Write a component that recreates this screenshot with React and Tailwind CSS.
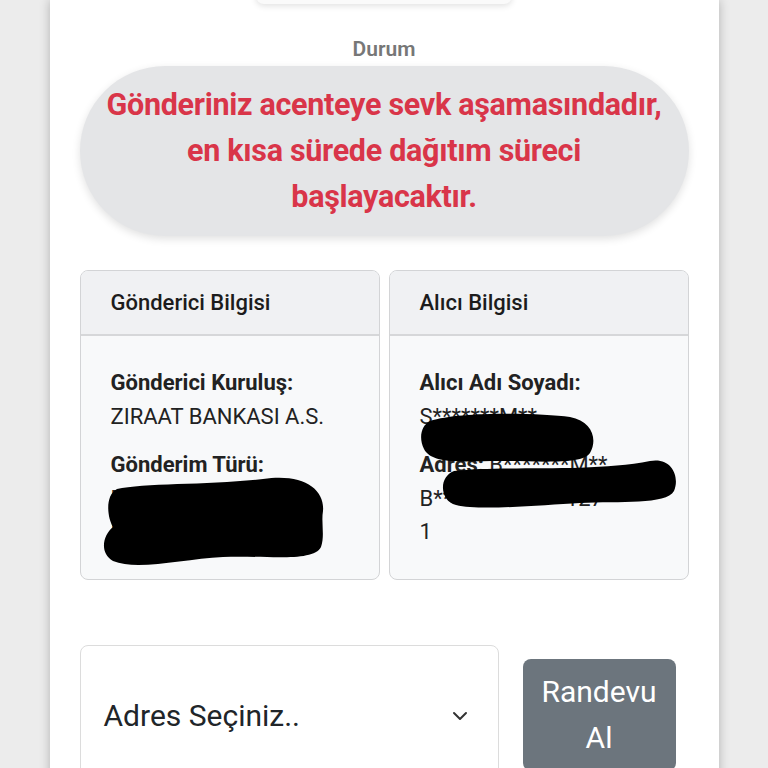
import React from 'react';
import { ChevronDown } from 'lucide-react';

const font = { fontFamily: 'Roboto, "Noto Sans", sans-serif' };

const Blob = ({ className, d, w, h }) => (
  <svg className={`absolute ${className}`} width={w} height={h} viewBox={`0 0 ${w} ${h}`}>
    <path d={d} fill="#000" />
  </svg>
);

const InfoCard = ({ title, children }) => (
  <div className="relative flex flex-col rounded-lg border border-[#d3d4d6] bg-[#f8f9fa] overflow-hidden">
    <div className="h-[65px] flex items-center px-[30px] bg-[#f0f1f3] border-b-2 border-[#d6d7d9]">
      <span className="text-[22px] font-medium text-[#1c1c1c]">{title}</span>
    </div>
    <div className="flex-1 px-[30px] pt-[30px] pb-[30px] text-[22px] leading-[33.5px] text-[#222]">
      {children}
    </div>
  </div>
);

export default function App() {
  return (
    <div className="min-h-screen w-full bg-[#ececec] flex justify-center overflow-hidden" style={font}>
      <div className="w-[669px] bg-white shadow-[0_0_10px_rgba(0,0,0,0.25)] flex flex-col items-center px-[30px]">
        {/* top button edge */}
        <div className="w-[256px] h-[44px] -mt-[40px] rounded-b-lg bg-[#fafafa] shadow-[0_2px_6px_rgba(0,0,0,0.12)]" />

        <div className="mt-[33px] text-[21px] leading-[24px] font-semibold text-[#777]">Durum</div>

        <div className="mt-[5px] w-full h-[170px] rounded-full bg-[#e4e5e7] shadow-[0_3px_8px_rgba(0,0,0,0.12)] flex items-center justify-center text-center px-4">
          <p className="text-[30.5px] leading-[46px] font-bold text-[#d93549] tracking-[-0.3px]">
            Gönderiniz acenteye sevk aşamasındadır,<br />
            en kısa sürede dağıtım süreci<br />
            başlayacaktır.
          </p>
        </div>

        <div className="mt-[34px] w-full grid grid-cols-2 gap-[9px]">
          <InfoCard title="Gönderici Bilgisi">
            <div className="font-bold">Gönderici Kuruluş:</div>
            <div>ZIRAAT BANKASI A.S.</div>
            <div className="font-bold mt-[15px]">Gönderim Türü:</div>
            <div>P*******</div>
            <div>K*****</div>
            <Blob
              className="left-[22px] top-[204px]"
              w={222}
              h={92}
              d="M14 14 C40 8 110 10 160 4 C200 -2 222 14 220 36 C218 48 222 60 218 72 C210 88 160 80 120 82 C80 84 34 96 10 86 C-4 78 0 60 10 52 C4 42 2 20 14 14 Z"
            />
          </InfoCard>
          <InfoCard title="Alıcı Bilgisi">
            <div className="font-bold">Alıcı Adı Soyadı:</div>
            <div>S*******M**</div>
            <div className="mt-[15px]"><span className="font-bold">Adres:</span> B*******M**</div>
            <div>B**************127</div>
            <div>1</div>
            <Blob
              className="left-[30px] top-[138px]"
              w={175}
              h={56}
              d="M10 12 C40 2 120 4 150 8 C172 12 178 30 170 44 C162 56 120 52 80 52 C44 52 12 56 4 40 C-2 28 2 16 10 12 Z"
            />
            <Blob
              className="left-[50px] top-[186px]"
              w={238}
              h={54}
              d="M14 14 C60 8 150 16 210 4 C232 0 240 20 234 34 C226 48 180 44 140 46 C100 48 40 54 16 48 C0 44 -2 20 14 14 Z"
            />
          </InfoCard>
        </div>

        <div className="mt-[65px] w-full flex items-start gap-[24px]">
          <div className="w-[419px] h-[142px] shrink-0 rounded-lg border border-[#dcdcdc] bg-white flex items-center justify-between pl-[23px] pr-[26px]">
            <span className="text-[30px] text-[#212529]">Adres Seçiniz..</span>
            <ChevronDown size={24} strokeWidth={2} className="text-[#333]" />
          </div>
          <button className="mt-[14px] w-[153px] h-[112px] rounded-lg bg-[#6c757d] text-white text-[30px] leading-[46px] text-center">
            Randevu<br />Al
          </button>
        </div>
      </div>
    </div>
  );
}
